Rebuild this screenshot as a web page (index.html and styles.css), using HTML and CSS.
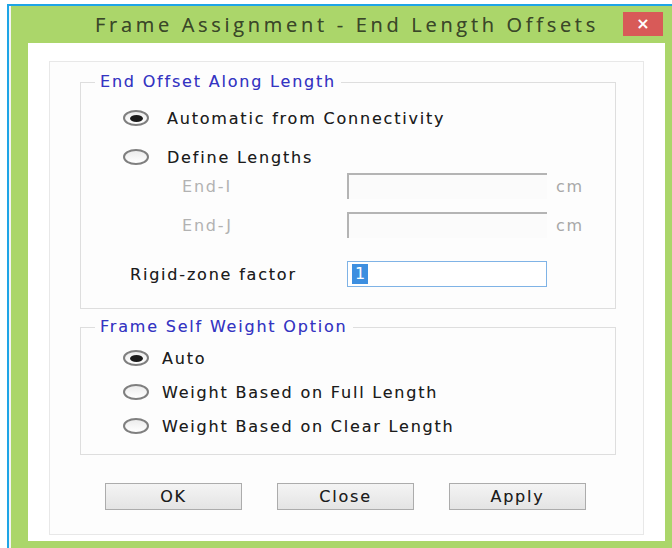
FILE: index.html
```html
<!DOCTYPE html>
<html lang="en">
<head>
<meta charset="utf-8">
<title>Frame Assignment - End Length Offsets</title>
<link rel="stylesheet" href="styles.css">
</head>
<body>
<div class="screen">
  <div class="frame">
    <div class="window">
      <div class="titlebar">
        <div class="title">Frame Assignment - End Length Offsets</div>
        <div class="close">&times;</div>
      </div>
      <div class="client">
        <div class="panel">
          <div class="group group-offset">
            <div class="legend">End Offset Along Length</div>
            <div class="row row-auto">
              <span class="radio checked"></span>
              <span class="label">Automatic from Connectivity</span>
            </div>
            <div class="row row-define">
              <span class="radio"></span>
              <span class="label">Define Lengths</span>
            </div>
            <div class="field field-i">
              <span class="field-label disabled">End-I</span>
              <span class="input input-disabled"></span>
              <span class="unit">cm</span>
            </div>
            <div class="field field-j">
              <span class="field-label disabled">End-J</span>
              <span class="input input-disabled"></span>
              <span class="unit">cm</span>
            </div>
            <div class="field field-rigid">
              <span class="field-label rigid-label">Rigid-zone factor</span>
              <span class="input input-active"><span class="selected">1</span></span>
            </div>
          </div>
          <div class="group group-weight">
            <div class="legend">Frame Self Weight Option</div>
            <div class="row row-w1">
              <span class="radio checked"></span>
              <span class="label">Auto</span>
            </div>
            <div class="row row-w">
              <span class="radio"></span>
              <span class="label">Weight Based on Full Length</span>
            </div>
            <div class="row row-w">
              <span class="radio"></span>
              <span class="label">Weight Based on Clear Length</span>
            </div>
          </div>
          <div class="buttons">
            <button class="btn" type="button">OK</button>
            <button class="btn" type="button">Close</button>
            <button class="btn" type="button">Apply</button>
          </div>
        </div>
      </div>
    </div>
  </div>
</div>
</body>
</html>
```
FILE: styles.css
```css
html, body {
  margin: 0;
  padding: 0;
  background: #ffffff;
}

body {
  width: 672px;
  height: 548px;
  overflow: hidden;
  font-family: "DejaVu Sans", "Liberation Sans", sans-serif;
  font-size: 16px;
  letter-spacing: 1.8px;
  color: #1c1c1c;
  text-shadow: 0 0 0.5px rgba(0, 0, 0, 0.35);
}

.screen {
  padding: 4px 0 0 7px;
}

/* selection outline of the window */
.frame {
  border-top: 2px solid #1ea5e6;
  border-left: 2px solid #1ea5e6;
  padding-left: 2px;
  background: #f4f4f4;
  height: 542px;
}

.window {
  background: #abd66a;
  height: 542px;
  display: flex;
  flex-direction: column;
}

.titlebar {
  height: 37px;
  display: flex;
  align-items: flex-start;
  padding-right: 9px;
}

.title {
  flex: 1;
  padding: 5px 0 0 84px;
  font-family: "Open Sans", "Noto Sans", sans-serif;
  font-size: 20px;
  letter-spacing: 3.7px;
  color: #3a4729;
  line-height: 28px;
  white-space: nowrap;
}

.close {
  margin-top: 6px;
  width: 40px;
  height: 24px;
  background: #d85a58;
  color: #ffffff;
  font-family: "DejaVu Sans", sans-serif;
  font-size: 16px;
  letter-spacing: 0;
  font-weight: bold;
  line-height: 24px;
  text-align: center;
  text-shadow: none;
}

.client {
  margin: 0 7px 0 17px;
  background: #ffffff;
  height: 498px;
  padding: 18px 21px 0 21px;
  box-sizing: border-box;
}

.panel {
  border: 1px solid #e8e8e8;
  background: #fdfdfd;
  padding: 20px 27px 23px 30px;
  height: 474px;
  box-sizing: border-box;
}

.group {
  border: 1px solid #dedede;
}

.group-offset {
  padding: 0 0 21px 0;
}

.group-weight {
  margin-top: 18px;
  padding: 0 0 15px 0;
}

.legend {
  width: max-content;
  margin: -10px 0 0 14px;
  padding: 0 5px;
  height: 18px;
  line-height: 18px;
  background: #fdfdfd;
  color: #3434c2;
  text-shadow: 0 0 0.5px rgba(40, 40, 180, 0.35);
}

.row {
  height: 26px;
  display: flex;
  align-items: center;
  padding-left: 42px;
}

.row-auto { margin-top: 14px; }
.row-define { margin-top: 13px; }
.row-w1 { margin-top: 9px; }
.row-w { margin-top: 8px; }

.row-auto .label,
.row-define .label {
  margin-left: 18px;
}

.row-w1 .label,
.row-w .label {
  margin-left: 13px;
}

.radio {
  width: 22px;
  height: 12px;
  border: 2px solid #7f7f7f;
  border-radius: 50%;
  background: linear-gradient(#ececec, #ffffff);
  display: flex;
  align-items: center;
  justify-content: center;
  flex: none;
}

.radio.checked::after {
  content: "";
  width: 13px;
  height: 7px;
  border-radius: 50%;
  background: #1a1a1a;
}

.field {
  height: 26px;
  display: flex;
  align-items: center;
}

.field-i { margin-top: 3px; }
.field-j { margin-top: 13px; }
.field-rigid { margin-top: 23px; }

.field-label {
  width: 165px;
  padding-left: 101px;
}

.rigid-label {
  width: 217px;
  padding-left: 49px;
}

.disabled {
  color: #b2b2b2;
  text-shadow: none;
}

.input {
  width: 200px;
  height: 26px;
  box-sizing: border-box;
  display: flex;
  align-items: center;
}

.input-disabled {
  border-top: 2px solid #b4b4b4;
  border-left: 2px solid #b4b4b4;
  background: #fbfbfb;
}

.input-active {
  border: 1px solid #7fb3e6;
  background: #ffffff;
  padding-left: 4px;
}

.selected {
  background: #3d8fe0;
  color: #ffffff;
  padding: 0 3px;
  letter-spacing: 0;
  line-height: 20px;
  text-shadow: none;
}

.unit {
  margin-left: 9px;
  color: #a8a8a8;
  text-shadow: none;
}

.buttons {
  margin-top: 28px;
  padding-left: 25px;
  display: flex;
  gap: 35px;
}

.btn {
  width: 137px;
  height: 27px;
  border: 1px solid #acacac;
  background: linear-gradient(#f4f4f4, #e4e4e4);
  font-family: "DejaVu Sans", "Liberation Sans", sans-serif;
  font-size: 16px;
  color: #1c1c1c;
  letter-spacing: 1.8px;
  text-shadow: 0 0 0.5px rgba(0, 0, 0, 0.35);
  padding: 0;
  margin: 0;
}
```
